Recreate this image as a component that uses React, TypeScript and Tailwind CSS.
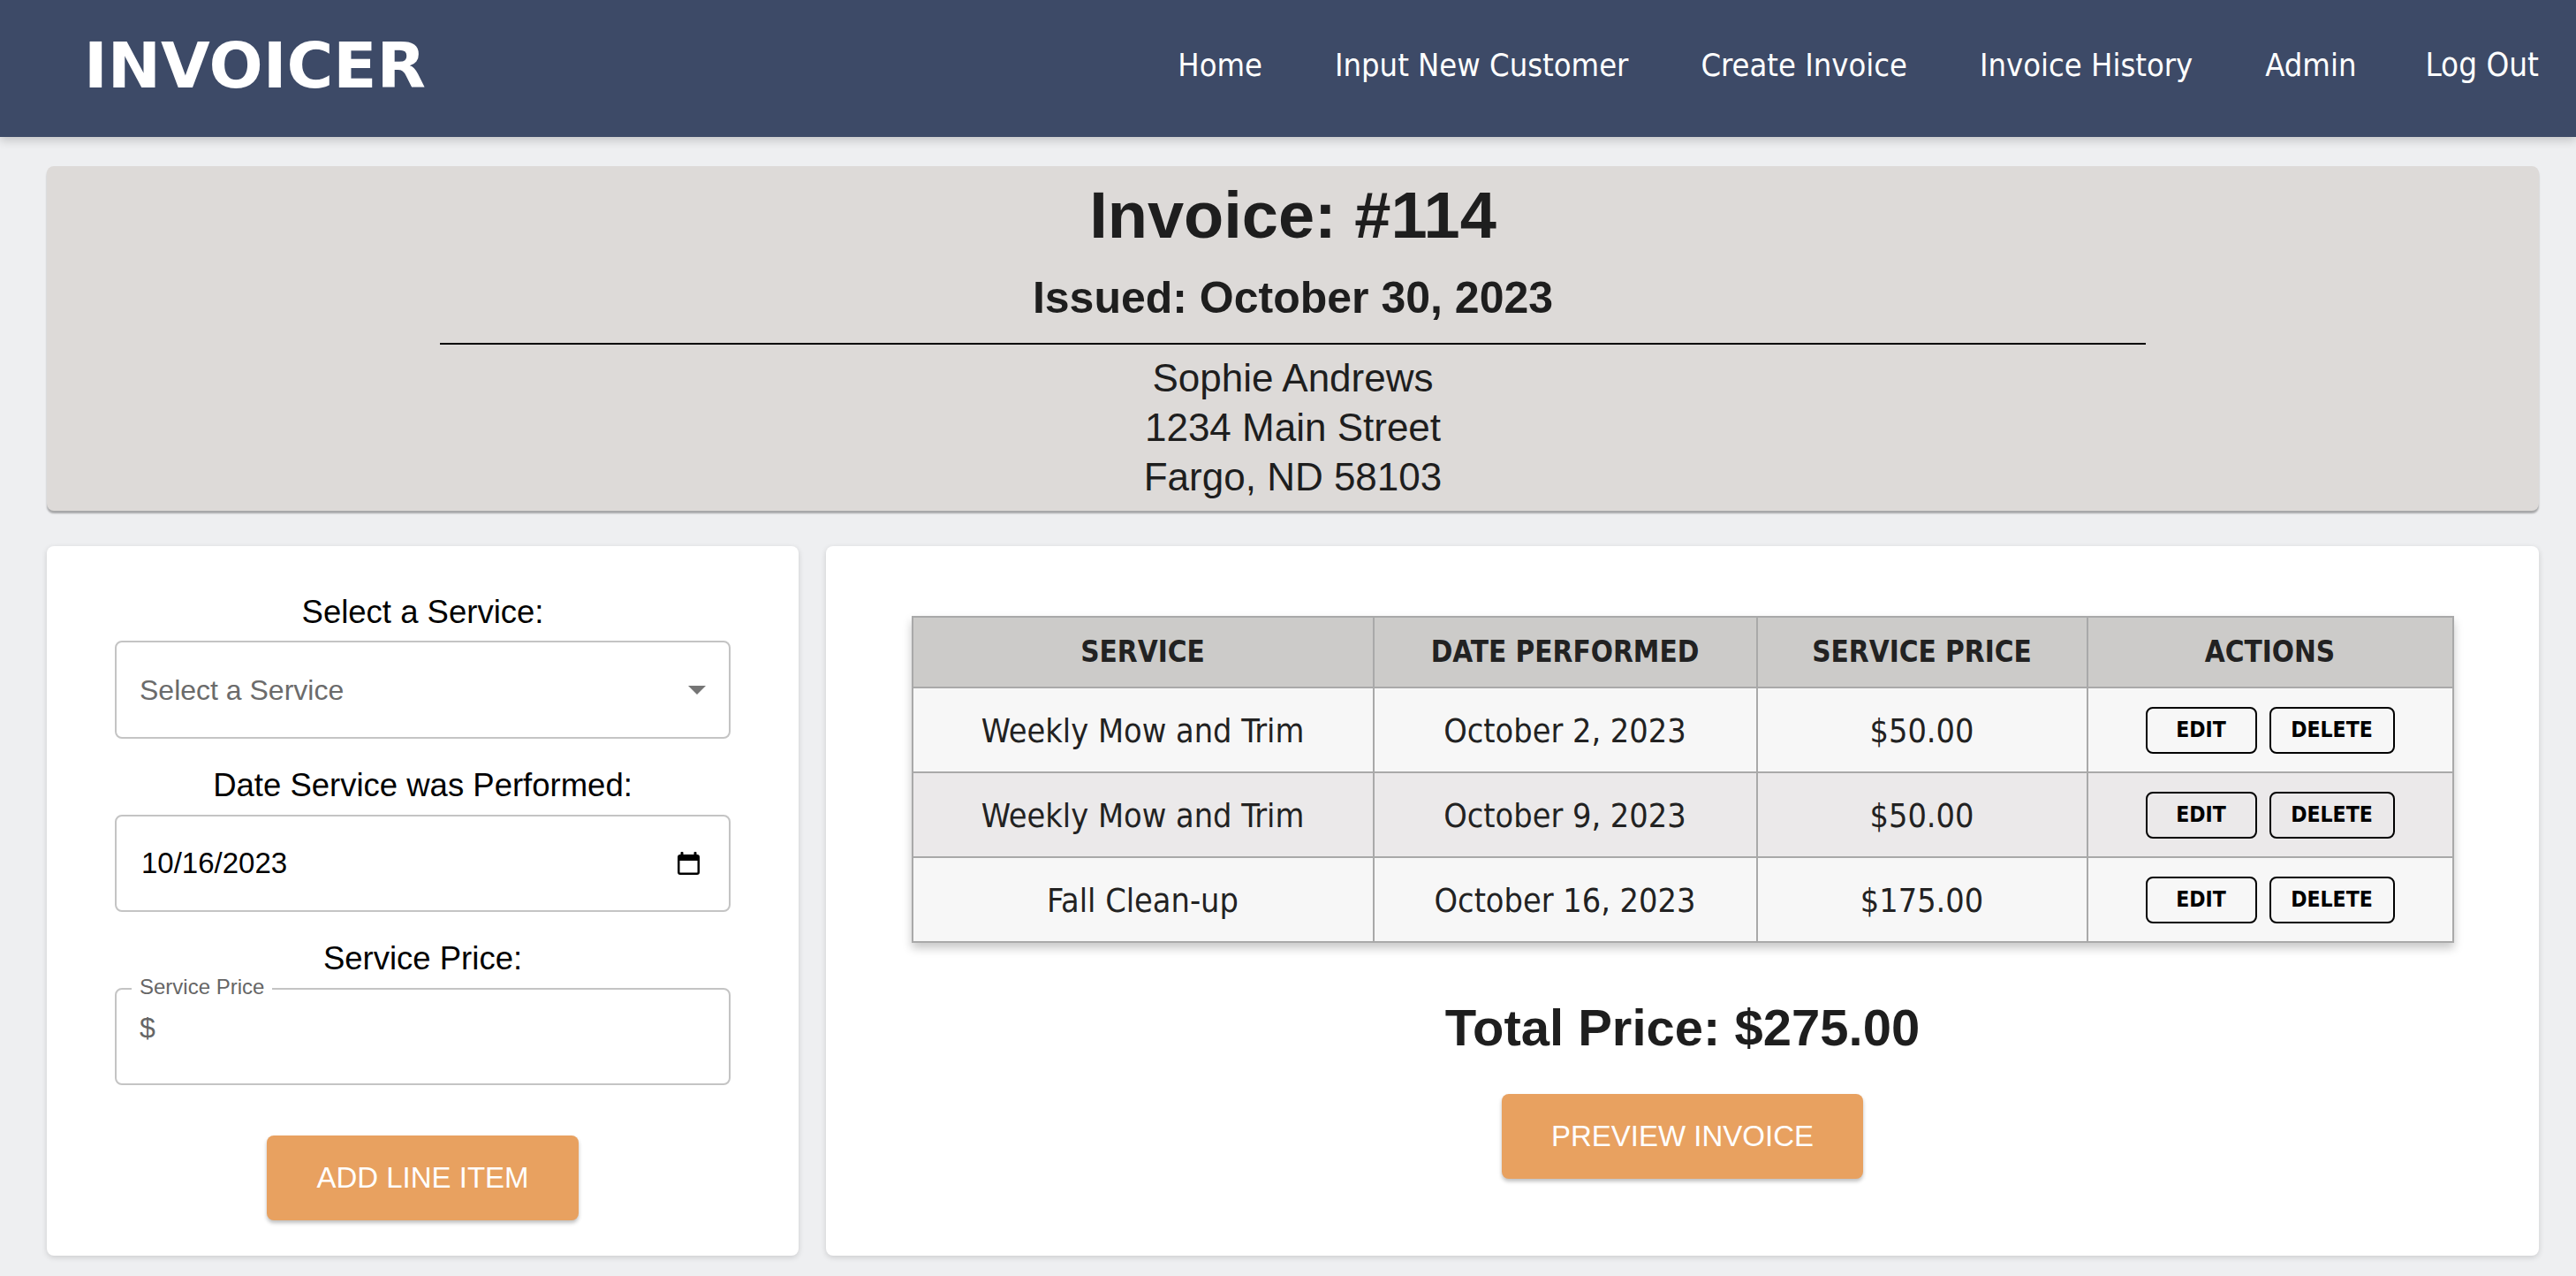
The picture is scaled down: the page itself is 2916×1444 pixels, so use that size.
import React from "react";

const rows = [
  { service: "Weekly Mow and Trim", date: "October 2, 2023", price: "$50.00", bg: "bg-[#f7f7f7]" },
  { service: "Weekly Mow and Trim", date: "October 9, 2023", price: "$50.00", bg: "bg-[#ebe9ea]" },
  { service: "Fall Clean-up", date: "October 16, 2023", price: "$175.00", bg: "bg-[#f7f7f7]" },
];

function CalendarIcon() {
  return (
    <svg width="25" height="26" viewBox="0 0 25 26" fill="#000">
      <rect x="3.5" y="0" width="3" height="5" rx="1" />
      <rect x="18.5" y="0" width="3" height="5" rx="1" />
      <path
        fillRule="evenodd"
        d="M3 3h19a3 3 0 0 1 3 3v17a3 3 0 0 1-3 3H3a3 3 0 0 1-3-3V6a3 3 0 0 1 3-3z M2.5 10v13a.5.5 0 0 0 .5.5h19a.5.5 0 0 0 .5-.5V10z"
      />
    </svg>
  );
}

export default function App() {
  const condensed = "font-['DejaVu_Sans_Condensed','DejaVu_Sans',sans-serif] [font-stretch:condensed]";
  return (
    <div className="min-h-[1444px] bg-[#eeeff1] font-['Liberation_Sans',Arial,sans-serif]">
      {/* Header */}
      <header className="h-[155px] bg-[#3d4a67] flex items-center justify-between pl-[95px] pr-[42px] pb-[8px] shadow-[0_4px_10px_rgba(0,0,0,0.18)] relative">
        <div className="font-['DejaVu_Sans',Verdana,sans-serif] font-bold text-[72px] leading-[72px] text-white">
          INVOICER
        </div>
        <nav className={`flex items-baseline gap-[82px] text-white ${condensed}`}>
          <span className="text-[36px] leading-[40px]">Home</span>
          <span className="text-[36px] leading-[40px]">Input New Customer</span>
          <span className="text-[36px] leading-[40px]">Create Invoice</span>
          <span className="text-[36px] leading-[40px]">Invoice History</span>
          <span className="text-[36px] leading-[40px]">Admin</span>
          <span className="text-[36.5px] leading-[40px] -ml-[4px]">Log Out</span>
        </nav>
      </header>

      <main className="pl-[53px] pr-[42px] pt-[33px]">
        {/* Invoice heading card */}
        <section className="rounded-[8px] bg-[#dddad8] shadow-[0_3px_2px_rgba(0,0,0,0.3)] pt-[20px] pb-[10px] flex flex-col items-center text-[#1e1e1e]">
          <h1 className="text-[74px] leading-[72px] font-bold">Invoice: #114</h1>
          <h2 className="mt-[32px] text-[50px] leading-[50px] font-bold">Issued: October 30, 2023</h2>
          <div className="mt-[26px] w-[1931px] h-[2px] bg-black" />
          <div className="mt-[10px] text-[44px] leading-[56px] text-center">
            <div>Sophie Andrews</div>
            <div>1234 Main Street</div>
            <div>Fargo, ND 58103</div>
          </div>
        </section>

        {/* Lower cards */}
        <div className="mt-[40px] flex gap-[31px]">
          {/* Left form card */}
          <section className="w-[851px] h-[803px] shrink-0 rounded-[8px] bg-white shadow-[0_2px_6px_rgba(0,0,0,0.15)] pt-[57px] flex flex-col items-center">
            <label className="text-[36.5px] leading-[36px] text-black">Select a Service:</label>
            <div className="mt-[14px] w-[697px] h-[111px] rounded-[8px] border-2 border-[#c4c4c4] flex items-center justify-between pl-[26px] pr-[26px]">
              <span className="text-[32px] text-[#6b6b6b]">Select a Service</span>
              <svg width="20" height="10" viewBox="0 0 20 10">
                <path d="M0 0h20L10 10z" fill="#757575" />
              </svg>
            </div>

            <label className="mt-[35px] text-[36.5px] leading-[36px] text-black">Date Service was Performed:</label>
            <div className="mt-[15px] w-[697px] h-[110px] rounded-[8px] border-2 border-[#c4c4c4] flex items-center justify-between pl-[28px] pr-[33px]">
              <span className="text-[33px] text-black">10/16/2023</span>
              <CalendarIcon />
            </div>

            <label className="mt-[35px] text-[36.5px] leading-[36px] text-black">Service Price:</label>
            <div className="relative mt-[15px] w-[697px] h-[110px] rounded-[8px] border-2 border-[#c4c4c4] pl-[26px] pt-[27px]">
              <span className="absolute left-[17px] top-[-15px] px-[9px] bg-white text-[24px] leading-[24px] text-[#666]">
                Service Price
              </span>
              <span className="text-[32px] leading-[32px] text-[#666]">$</span>
            </div>

            <button className="mt-[57px] h-[96px] px-[56px] rounded-[8px] bg-[#e8a160] text-white text-[33px] shadow-[0_3px_4px_rgba(0,0,0,0.25)]">
              ADD LINE ITEM
            </button>
          </section>

          {/* Right table card */}
          <section className="flex-1 h-[803px] rounded-[8px] bg-white shadow-[0_2px_6px_rgba(0,0,0,0.15)] pt-[79px] flex flex-col items-center">
            <table className={`w-[1744px] table-fixed border-collapse border-2 border-[#a9a9a9] shadow-[0_6px_10px_rgba(0,0,0,0.22)] text-[#222] ${condensed}`}>
              <colgroup>
                <col className="w-[522px]" />
                <col className="w-[434px]" />
                <col className="w-[374px]" />
                <col className="w-[414px]" />
              </colgroup>
              <thead>
                <tr className="bg-[#cccbc9]">
                  <th className="h-[80px] border-2 border-[#a9a9a9] text-[33px] font-bold">SERVICE</th>
                  <th className="h-[80px] border-2 border-[#a9a9a9] text-[33px] font-bold">DATE PERFORMED</th>
                  <th className="h-[80px] border-2 border-[#a9a9a9] text-[33px] font-bold">SERVICE PRICE</th>
                  <th className="h-[80px] border-2 border-[#a9a9a9] text-[33px] font-bold">ACTIONS</th>
                </tr>
              </thead>
              <tbody>
                {rows.map((r, i) => (
                  <tr key={i} className={r.bg}>
                    <td className="h-[96px] border-2 border-[#a9a9a9] text-center text-[37.5px] pt-[2px]">{r.service}</td>
                    <td className="h-[96px] border-2 border-[#a9a9a9] text-center text-[37.5px] pt-[2px]">{r.date}</td>
                    <td className="h-[96px] border-2 border-[#a9a9a9] text-center text-[37.5px] pt-[2px]">{r.price}</td>
                    <td className="h-[96px] border-2 border-[#a9a9a9]">
                      <div className="flex justify-center gap-[14px]">
                        <button className="w-[126px] h-[53px] rounded-[8px] border-2 border-black text-[24.5px] font-bold text-black">
                          EDIT
                        </button>
                        <button className="w-[142px] h-[53px] rounded-[8px] border-2 border-black text-[24.5px] font-bold text-black">
                          DELETE
                        </button>
                      </div>
                    </td>
                  </tr>
                ))}
              </tbody>
            </table>

            <div className="mt-[67px] text-[58px] leading-[57px] font-bold text-[#1e1e1e]">Total Price: $275.00</div>

            <button className="mt-[47px] h-[96px] px-[56px] rounded-[8px] bg-[#e8a160] text-white text-[33px] shadow-[0_3px_4px_rgba(0,0,0,0.25)]">
              PREVIEW INVOICE
            </button>
          </section>
        </div>
      </main>
    </div>
  );
}
